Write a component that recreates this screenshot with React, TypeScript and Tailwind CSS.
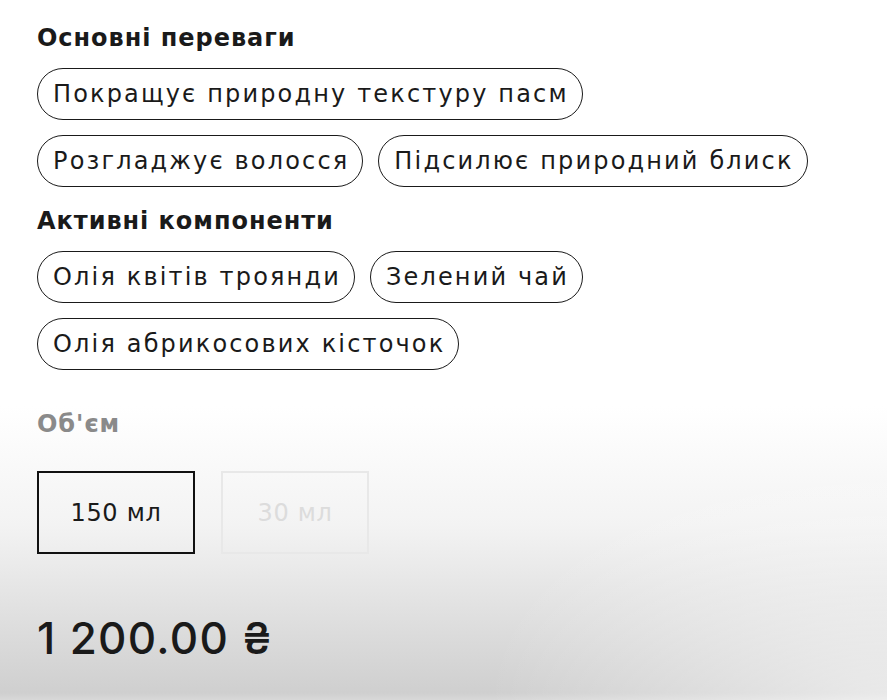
const benefits = [
  "Покращує природну текстуру пасм",
  "Розгладжує волосся",
  "Підсилює природний блиск",
];

const ingredients = [
  "Олія квітів троянди",
  "Зелений чай",
  "Олія абрикосових кісточок",
];

function Pill({ label }: { label: string }) {
  return (
    <span className="inline-flex h-[52px] items-center rounded-full border-[1.5px] border-[#1a1a1a] pl-[15px] pr-[13px] text-[24px] tracking-[0.09em] text-[#1a1a1a]">
      {label}
    </span>
  );
}

export default function App() {
  return (
    <div
      className="min-h-[700px] w-full bg-[radial-gradient(ellipse_45%_35%_at_100%_100%,rgba(255,255,255,0.55),transparent),linear-gradient(to_bottom,#ffffff_0%,#ffffff_58%,#f3f3f3_75%,#cfcfcf_99%,#d8d8d8_100%)] pl-[37px] pt-[22px] text-[#1a1a1a]"
      style={{ fontFamily: "'DejaVu Sans', 'Noto Sans', sans-serif" }}
    >
      <div className="w-[800px]">
        <h3 className="text-[24px] font-semibold leading-[32px] tracking-[0.04em]">Основні переваги</h3>
        <div className="mt-[14px] flex flex-wrap gap-[15px]">
          {benefits.map((b) => (
            <Pill key={b} label={b} />
          ))}
        </div>

        <h3 className="mt-[18px] text-[24px] font-semibold leading-[32px] tracking-[0.04em]">Активні компоненти</h3>
        <div className="mt-[14px] flex flex-wrap gap-[15px]">
          {ingredients.map((b) => (
            <Pill key={b} label={b} />
          ))}
        </div>
      </div>

      {/* Volume */}
      <div className="mt-[38px] text-[24px] font-semibold leading-[32px] tracking-[0.04em] text-[#8a8a8a]">Об'єм</div>
      <div className="mt-[31px] flex gap-[26px]">
        <button className="flex h-[83px] w-[158px] items-center justify-center border-2 border-[#111] text-[24px] tracking-[0.03em] text-[#1a1a1a]">
          150 мл
        </button>
        <button className="flex h-[83px] w-[148px] items-center justify-center border-2 border-[#e8e8e8] text-[24px] tracking-[0.03em] text-[#dcdcdc]">
          30 мл
        </button>
      </div>

      <div
        className="mt-[57px] text-[44px] font-medium leading-[54px] tracking-[0.03em]"
        style={{ fontFamily: "Inter, 'DejaVu Sans', sans-serif" }}
      >
        1 200.00 ₴
      </div>
    </div>
  );
}
